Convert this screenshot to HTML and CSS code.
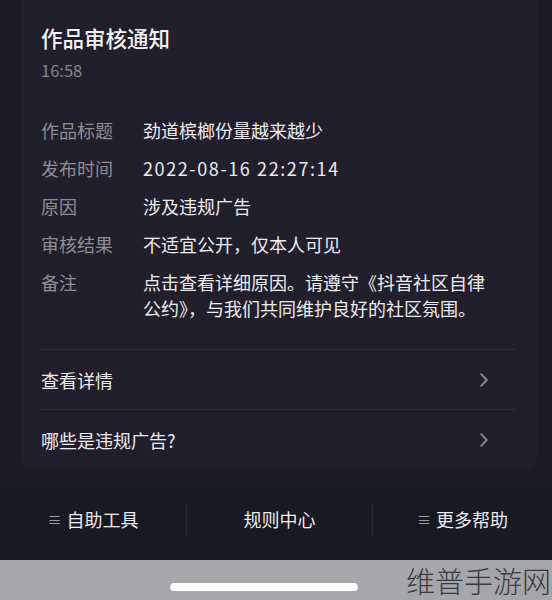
FILE: index.html
```html
<!DOCTYPE html>
<html lang="zh-CN">
<head>
<meta charset="utf-8">
<title>作品审核通知</title>
<link rel="stylesheet" href="styles.css">
</head>
<body>
<div class="screen">
  <div class="main">
    <section class="card">
      <h1 class="title">作品审核通知</h1>
      <div class="time">16:58</div>
      <dl class="details">
        <div class="row"><dt>作品标题</dt><dd>劲道槟榔份量越来越少</dd></div>
        <div class="row"><dt>发布时间</dt><dd class="num">2022-08-16 22:27:14</dd></div>
        <div class="row"><dt>原因</dt><dd>涉及违规广告</dd></div>
        <div class="row"><dt>审核结果</dt><dd>不适宜公开，仅本人可见</dd></div>
        <div class="row"><dt>备注</dt><dd class="note">点击查看详细原因。请遵守《抖音社区自律公约》，与我们共同维护良好的社区氛围。</dd></div>
      </dl>
      <a class="link first">查看详情<svg class="chev" viewBox="0 0 8 14" width="8" height="14"><path d="M1.2 1.2 L6.8 7 L1.2 12.8" fill="none" stroke="currentColor" stroke-width="1.8" stroke-linecap="round" stroke-linejoin="round"/></svg></a>
      <a class="link">哪些是违规广告?<svg class="chev" viewBox="0 0 8 14" width="8" height="14"><path d="M1.2 1.2 L6.8 7 L1.2 12.8" fill="none" stroke="currentColor" stroke-width="1.8" stroke-linecap="round" stroke-linejoin="round"/></svg></a>
    </section>
  </div>
  <nav class="toolbar">
    <div class="tool"><span class="menu">≡</span>自助工具</div>
    <div class="tool">规则中心</div>
    <div class="tool"><span class="menu">≡</span>更多帮助</div>
  </nav>
  <div class="homebar">
    <div class="pill"></div>
    <div class="watermark">维普手游网</div>
  </div>
</div>
</body>
</html>
```

FILE: styles.css
```css
* { box-sizing: border-box; }
html, body { margin: 0; padding: 0; }
body {
  width: 552px;
  height: 600px;
  overflow: hidden;
  background: #1b1b25;
  font-family: "Noto Sans CJK SC", "Noto Sans", sans-serif;
}
.screen {
  display: flex;
  flex-direction: column;
  height: 600px;
}
.main {
  flex: 1;
  padding: 0 15px 0 21px;
}
.card {
  background: #211f2b;
  border-radius: 0 0 10px 10px;
  padding: 22px 21px 0 20px;
}
.title {
  margin: 0;
  font-size: 21.5px;
  line-height: 32px;
  font-weight: 500;
  color: #f2f2f4;
}
.time {
  margin-top: 6px;
  font-size: 16.5px;
  line-height: 20px;
  color: #85848e;
}
.details {
  margin: 37px 0 0 0;
  display: flex;
  flex-direction: column;
  gap: 12px;
}
.row {
  display: grid;
  grid-template-columns: 102px 1fr;
  font-size: 18px;
  line-height: 26px;
}
.row dt {
  color: #8e8d97;
}
.row dd {
  margin: 0;
  color: #ececef;
}
.note {
  max-width: 346px;
}
.num {
  letter-spacing: 1.6px;
}
.link {
  display: flex;
  align-items: center;
  justify-content: space-between;
  height: 60px;
  border-top: 1px solid #2f2e3a;
  font-size: 18px;
  color: #ececef;
  padding-right: 28px;
}
.link.first {
  margin-top: 28px;
}
.chev { color: #8b8a94; }
.toolbar {
  height: 74px;
  background: #171923;
  display: grid;
  grid-template-columns: 186px 186px 1fr;
  align-items: center;
  padding-bottom: 8px;
}
.tool {
  display: flex;
  align-items: center;
  justify-content: center;
  font-size: 18px;
  color: #ececef;
  height: 32px;
}
.tool + .tool {
  border-left: 1px solid #262834;
}
.menu {
  color: #9d9ca6;
  font-size: 14px;
  margin-right: 5px;
}
.homebar {
  height: 40px;
  background: #a5a6aa;
  display: flex;
  align-items: center;
  justify-content: space-between;
}
.pill {
  width: 188px;
  height: 8px;
  border-radius: 4px;
  background: #ffffff;
  margin: 14px 0 0 170px;
}
.watermark {
  font-size: 29px;
  line-height: 38px;
  font-weight: 300;
  color: #3a3a3e;
  padding-right: 1px;
  font-family: "Noto Sans CJK SC", sans-serif;
}
```
